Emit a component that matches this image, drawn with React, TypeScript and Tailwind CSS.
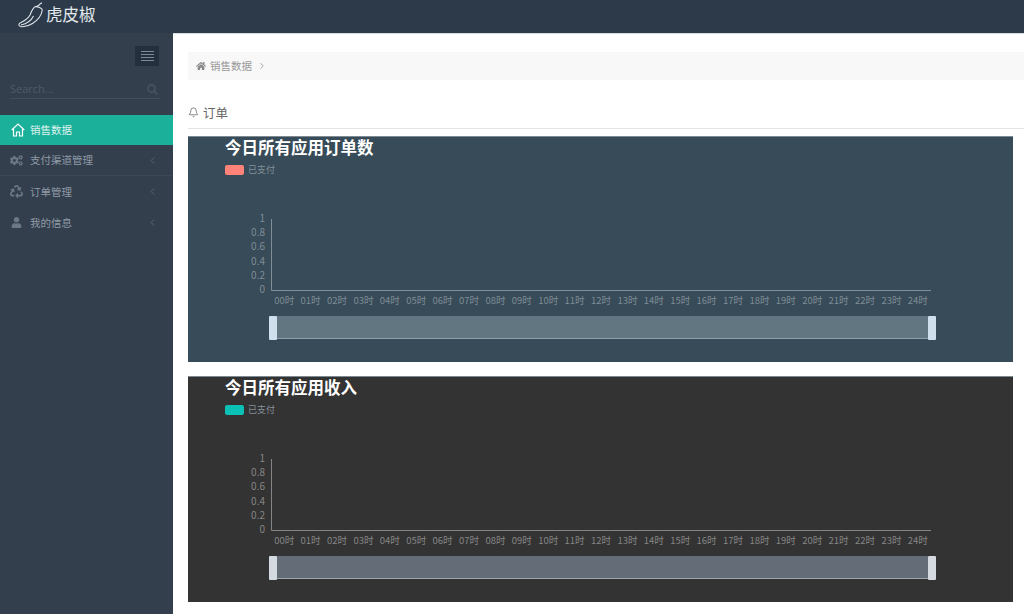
import { Bell, ChevronLeft, ChevronRight } from "lucide-react";
import { FaCogs, FaHome, FaRecycle, FaSearch, FaUser } from "react-icons/fa";

const FONT = "[font-family:'Noto_Sans_CJK_SC','Open_Sans',sans-serif]";

const hours = Array.from({ length: 25 }, (_, i) => String(i).padStart(2, "0") + "时");
const ticks = ["1", "0.8", "0.6", "0.4", "0.2", "0"];

function Logo() {
  return (
    <svg width="26" height="26" viewBox="0 0 26 26" fill="none" stroke="#dfe5ea" strokeWidth="1.1" className="mb-[4px] shrink-0">
      <path d="M18 4.5 C19 4 21 4 22 2 L24 0.8 M17.5 4.5 C20 5 24.5 5.5 24.2 8.5 C23.5 13 20 18 14.5 21.5 C10.5 24 5 25 2.5 24.5 C0 23.5 0.5 21.5 3 20.5 C7 18.5 10 17 12 13 C13.5 9.5 14.5 6 17.5 4.5 Z" />
      <path d="M3 23 C8 22 13 19 15.5 14" />
    </svg>
  );
}

function NavItem({ icon, label, border }: { icon: React.ReactNode; label: string; border?: boolean }) {
  return (
    <div className={`flex h-[31px] items-center pl-[10px] pr-[15px] text-[10.5px] text-[#8f9aa6] ${border ? "border-b border-[#3c4958]" : ""}`}>
      <span className="flex w-5 justify-start text-[#6b7885]">{icon}</span>
      <span>{label}</span>
      <ChevronLeft className="ml-auto h-[11px] w-[11px] text-[#5c6875]" />
    </div>
  );
}

function Sidebar() {
  return (
    <aside className="w-[173px] shrink-0 bg-[#343f4e]">
      <div className="flex justify-end pt-[13px] pr-[14px]">
        <div className="flex h-5 w-6 flex-col items-center justify-center gap-[2px] bg-[#232f3c]">
          <span className="h-px w-[13px] bg-[#7c8894]" />
          <span className="h-px w-[13px] bg-[#7c8894]" />
          <span className="h-px w-[13px] bg-[#7c8894]" />
          <span className="h-px w-[13px] bg-[#7c8894]" />
        </div>
      </div>
      <div className="mt-[14px] ml-[10px] flex h-[19px] w-[150px] items-center justify-between border-b border-[#414e5d] pr-[2px] [font-family:'Open_Sans',sans-serif] text-[11px] text-[#4f5b68]">
        <span>Search...</span>
        <FaSearch className="h-[11px] w-[11px] text-[#46525f]" />
      </div>
      <div className="mt-[16px] flex h-[30px] items-center bg-[#1bb09a] pl-[11px] text-[10.5px] text-[#dff3ef]">
        <svg width="14" height="14" viewBox="0 0 14 14" fill="none" stroke="#ffffff" strokeWidth="1.2" className="mr-[5px]">
          <path d="M0.7 7 L7 1 L13.3 7 M2.5 6 V13 H5.5 V9 H8.5 V13 H11.5 V6" />
        </svg>
        <span>销售数据</span>
      </div>
      <NavItem icon={<FaCogs className="h-[13px] w-[13px]" />} label="支付渠道管理" border />
      <NavItem icon={<FaRecycle className="h-[13px] w-[13px]" />} label="订单管理" />
      <NavItem icon={<FaUser className="ml-[1px] h-[11px] w-[11px]" />} label="我的信息" />
    </aside>
  );
}

function Chart({ title, swatch, bg, fill, axis, label, handle, line }: { title: string; swatch: string; bg: string; fill: string; axis: string; label: string; handle: string; line: string }) {
  return (
    <section className={`h-[226px] w-[825px] ${bg} border-t border-[#7d8a92] pl-[37px]`}>
      <h2 className="text-[16.5px] leading-[20px] font-bold text-white">{title}</h2>
      <div className="mt-[7px] flex items-center text-[9px] leading-[11px] text-[#84909a]">
        <span className={`mr-1 h-[10px] w-[19px] rounded-[2px] ${swatch}`} />
        已支付
      </div>
      <svg width="725" height="108" viewBox="0 0 725 108" className="mt-[34px] block">
        <path d="M46.5 10 V81.5 H706" fill="none" stroke={axis} strokeWidth="1" />
        {ticks.map((t, i) => (
          <text key={t} x="40" y={13 + i * 14.2} textAnchor="end" fontSize="10" fill={label}>{t}</text>
        ))}
        {hours.map((h, i) => (
          <text key={h} x={59.2 + i * 26.4} y="95" textAnchor="middle" fontSize="9.5" fill={label}>{h}</text>
        ))}
      </svg>
      <div className="-mt-[1px] ml-[44px] flex h-6 w-[667px]">
        <span className={`h-6 w-2 rounded-[1px] ${handle}`} />
        <span className={`h-[23px] flex-1 border-b ${line} ${fill}`} />
        <span className={`h-6 w-2 rounded-[1px] ${handle}`} />
      </div>
    </section>
  );
}

export default function App() {
  return (
    <div className={`flex h-[614px] w-[1024px] flex-col overflow-hidden bg-white ${FONT}`}>
      <header className="flex h-[33px] shrink-0 items-center bg-[#2c3a4a] pl-[18px]">
        <Logo />
        <span className="mb-[4px] ml-[2px] text-[16.5px] leading-none font-normal text-[#e3e8ec]">虎皮椒</span>
      </header>
      <div className="flex min-h-0 flex-1">
        <Sidebar />
        <main className="min-w-0 flex-1 border-t border-[#d6dade] pl-[15px]">
          <div className="mt-[18px] flex h-[28px] items-center bg-[#f8f8f8] pl-[8px] text-[10.5px] text-[#999]">
            <FaHome className="h-[10px] w-[10px] text-[#888]" />
            <span className="ml-[4px]">销售数据</span>
            <ChevronRight className="ml-[5px] h-[10px] w-[10px] text-[#999]" />
          </div>
          <div className="mt-[23px] flex h-[26px] items-start gap-[4px] border-b border-[#e5e5e5] text-[12.5px] leading-[20px] font-normal text-[#666]">
            <Bell className="mt-[4px] h-[11px] w-[11px] text-[#555]" strokeWidth={1.5} />
            订单
          </div>
          <div className="mt-[7px] flex flex-col gap-[14px]">
            <Chart title="今日所有应用订单数" swatch="bg-[#ff8378]" bg="bg-[#374b58]" fill="bg-[#627682]" axis="#7f8e98" label="#7f8c96" handle="bg-[#cfdfeb]" line="border-[#8fa0ab]" />
            <Chart title="今日所有应用收入" swatch="bg-[#0bc1b5]" bg="bg-[#333333]" fill="bg-[#646c77]" axis="#858585" label="#858585" handle="bg-[#d5d9e0]" line="border-[#a0a6ae]" />
          </div>
        </main>
      </div>
    </div>
  );
}
